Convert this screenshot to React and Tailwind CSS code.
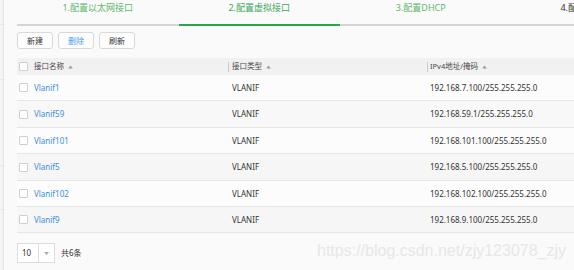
import React from "react";

const FONT = { fontFamily: '"Noto Sans", "Noto Sans CJK SC", sans-serif' };

const steps = [
  { label: "1.配置以太网接口", text: "text-[#5fb86a]", bar: "bg-[#d4d4d4]" },
  { label: "2.配置虚拟接口", text: "text-[#3aa75a]", bar: "bg-[#24a94b]" },
  { label: "3.配置DHCP", text: "text-[#5fb86a]", bar: "bg-[#d4d4d4]" },
  { label: "4.配置路由", text: "text-[#333333]", bar: "bg-[#d4d4d4]" },
];

const rows = [
  { name: "Vlanif1", ip: "192.168.7.100/255.255.255.0", h: "h-[26px]", bg: "bg-[#fcfcfc]" },
  { name: "Vlanif59", ip: "192.168.59.1/255.255.255.0", h: "h-[27px]", bg: "bg-[#f8f8f8]" },
  { name: "Vlanif101", ip: "192.168.101.100/255.255.255.0", h: "h-[26px]", bg: "bg-[#fcfcfc]" },
  { name: "Vlanif5", ip: "192.168.5.100/255.255.255.0", h: "h-[27px]", bg: "bg-[#f6f6f6]" },
  { name: "Vlanif102", ip: "192.168.102.100/255.255.255.0", h: "h-[26px]", bg: "bg-[#fcfcfc]" },
  { name: "Vlanif9", ip: "192.168.9.100/255.255.255.0", h: "h-[26px]", bg: "bg-[#f6f6f6]" },
];

function Check() {
  return <span className="w-[9px] h-[9px] border border-[#cfcfcf] bg-white rounded-[1px] shrink-0" />;
}

function Sort() {
  return (
    <svg width="5" height="4" viewBox="0 0 5 4" className="ml-[4px]">
      <path d="M2.5 0.5 L4.8 3.5 L0.2 3.5 Z" fill="#9a9a9a" />
    </svg>
  );
}

export default function App() {
  return (
    <div className="relative w-[574px] h-[270px] overflow-hidden bg-[#fafafa] flex text-[#333]" style={FONT}>
      <aside className="w-[4px] shrink-0 bg-[#f4f4f4] border-r border-[#e4e4e4] flex flex-col">
        <div className="h-[25px] border-b border-[#e8e8e8]" />
        <div className="h-[55px] border-b border-[#e8e8e8]" />
        <div className="h-[86px] border-b border-[#e8e8e8]" />
        <div className="h-[44px] border-b border-[#e8e8e8]" />
      </aside>
      <main className="flex-1 min-w-0 pl-[13px] flex flex-col">
        <div className="flex w-[646px] shrink-0">
          {steps.map((s) => (
            <div key={s.label} className="w-[161.5px] flex flex-col">
              <div className={`h-[24px] pt-[2px] text-center text-[9px] leading-[12px] ${s.text}`}>{s.label}</div>
              <div className={`h-[2px] ${s.bar}`} />
            </div>
          ))}
        </div>

        <div className="flex gap-[5px] mt-[6px]">
          {["新建", "删除", "刷新"].map((b) => (
            <div
              key={b}
              className={`w-[36px] h-[17px] flex items-center justify-center border border-[#d9d9d9] rounded-[3px] bg-[#fdfdfd] text-[8px] ${
                b === "删除" ? "text-[#4a9fea]" : "text-[#333]"
              }`}
            >
              {b}
            </div>
          ))}
        </div>

        <div className="mt-[9px] flex flex-col w-[557px]">
          <div className="grid grid-cols-[211px_199px_1fr] h-[17px] bg-[#f1f1f1] text-[7.5px] text-[#4a4a4a] items-center">
            <div className="flex items-center pl-[2px]">
              <Check />
              <span className="ml-[6px]">接口名称</span>
              <Sort />
            </div>
            <div className="flex items-center">
              <span className="w-[1px] h-[10px] bg-[#cccccc]" />
              <span className="ml-[3px]">接口类型</span>
              <Sort />
            </div>
            <div className="flex items-center">
              <span className="w-[1px] h-[10px] bg-[#cccccc]" />
              <span className="ml-[2px]">IPv4地址/掩码</span>
              <Sort />
            </div>
          </div>
          {rows.map((r) => (
            <div
              key={r.name}
              className={`grid grid-cols-[211px_199px_1fr] ${r.h} ${r.bg} border-b border-[#e6e6e6] items-center text-[8px]`}
            >
              <div className="flex items-center pl-[2px]">
                <Check />
                <span className="ml-[6px] text-[#3c8fd8]">{r.name}</span>
              </div>
              <div className="pl-[4px] text-[#333]">VLANIF</div>
              <div className="pl-[3px] text-[#333]">{r.ip}</div>
            </div>
          ))}
        </div>

        <div className="mt-[10px] flex items-center">
          <div className="w-[38px] h-[20px] border border-[#dcdcdc] bg-white flex text-[8px]">
            <div className="w-[21px] pl-[4px] flex items-center border-r border-[#dcdcdc]">10</div>
            <div className="flex-1 flex items-center justify-center">
              <svg width="5" height="3" viewBox="0 0 5 3">
                <path d="M0 0 L5 0 L2.5 3 Z" fill="#aaaaaa" />
              </svg>
            </div>
          </div>
          <span className="ml-[6px] text-[8px]">共6条</span>
        </div>
      </main>
      <div
        className="absolute left-[317px] top-[240px] text-[16px] leading-[22px] text-[#e7e7e7] whitespace-nowrap"
        style={{ fontFamily: '"Liberation Sans", Arial, sans-serif' }}
      >
        https://blog.csdn.net/zjy123078_zjy
      </div>
    </div>
  );
}
